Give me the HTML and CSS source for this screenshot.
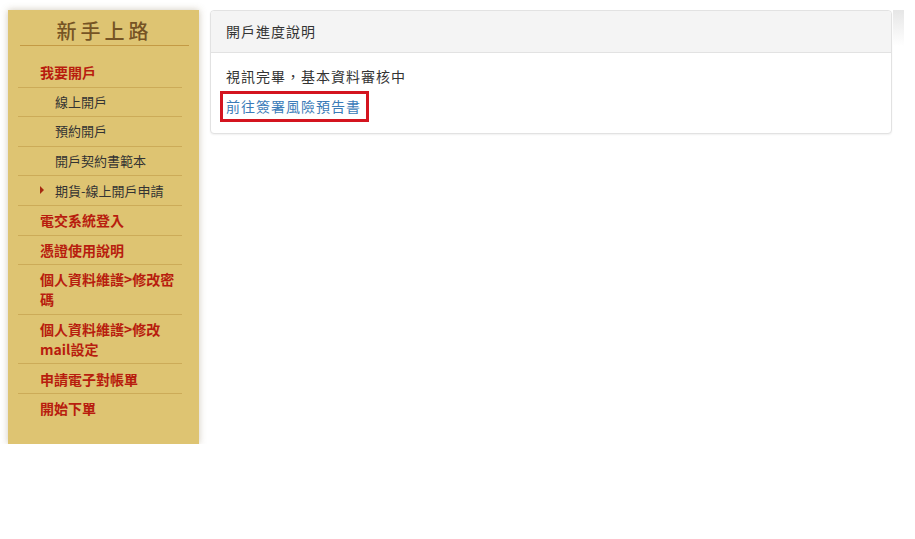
FILE: index.html
```html
<!DOCTYPE html>
<html lang="zh-Hant">
<head>
    <meta charset="UTF-8">
    <meta name="viewport" content="width=device-width, initial-scale=1.0">
    <title>開戶進度說明</title>
    <link rel="stylesheet" href="styles.css">
</head>
<body>
    <div class="page">
        <aside class="sidebar">
            <h3 class="side-title">新手上路</h3>
            <ul class="menu">
                <li class="main">我要開戶</li>
                <li class="sub">線上開戶</li>
                <li class="sub">預約開戶</li>
                <li class="sub">開戶契約書範本</li>
                <li class="sub arrow">期貨-線上開戶申請</li>
                <li class="main">電交系統登入</li>
                <li class="main">憑證使用說明</li>
                <li class="main">個人資料維護&gt;修改密碼</li>
                <li class="main">個人資料維護&gt;修改mail設定</li>
                <li class="main">申請電子對帳單</li>
                <li class="main last">開始下單</li>
            </ul>
        </aside>

        <div class="panel">
            <div class="panel-heading">開戶進度說明</div>
            <div class="panel-body">
                <p>視訊完畢，基本資料審核中</p>
                <a class="sign-link" href="#">前往簽署風險預告書</a>
            </div>
        </div>

        <div class="edge"></div>
    </div>
</body>
</html>
```

FILE: styles.css
```css
body {
    margin: 0;
    padding: 0;
    background: #fff;
    font-family: "Liberation Sans", "Noto Sans CJK TC", sans-serif;
    color: #333;
}

.page {
    display: flex;
    align-items: flex-start;
    padding: 10px 0 0 8px;
}

.sidebar {
    width: 191px;
    flex: none;
    background-color: #dec472;
    box-shadow: 0 0 7px rgba(120, 100, 60, 0.35);
    padding: 8px 0 21px;
}

.side-title {
    margin: 0 10px 0 12px;
    padding: 0 0 1px;
    font-family: "Noto Sans CJK TC", serif;
    font-size: 20px;
    font-weight: 500;
    line-height: 26px;
    letter-spacing: 4px;
    text-align: center;
    color: #765424;
    border-bottom: 1px solid #c49a44;
}

.menu {
    list-style: none;
    margin: 12px 17px 0 10px;
    padding: 0;
}

.menu li {
    line-height: 20px;
    padding: 4.3px 0 4.3px 22px;
    border-bottom: 1px solid #ccab58;
}

.menu li.last {
    border-bottom: none;
}

.main {
    font-family: "Noto Sans CJK TC", sans-serif;
    font-size: 14px;
    font-weight: 700;
    color: #b81d0e;
}

.sub {
    font-family: "Noto Sans CJK TC", sans-serif;
    font-size: 13px;
    color: #333;
    padding-left: 37px !important;
    position: relative;
}

.arrow::before {
    content: "";
    position: absolute;
    left: 22px;
    top: 10px;
    border-left: 4px solid #a52a10;
    border-top: 4px solid transparent;
    border-bottom: 4px solid transparent;
}

.panel {
    width: 680px;
    flex: none;
    margin-left: 11px;
    background: #fff;
    border: 1px solid #e2e2e2;
    border-radius: 4px;
    box-shadow: 0 1px 2px rgba(0, 0, 0, 0.06);
    font-family: "Noto Sans CJK TC", sans-serif;
    font-size: 14px;
    letter-spacing: 1px;
}

.panel-heading {
    background: #f4f4f4;
    padding: 10px 15px;
    line-height: 21px;
    border-bottom: 1px solid #e2e2e2;
    border-radius: 4px 4px 0 0;
    color: #333;
}

.panel-body {
    padding: 13px 15px 11px;
}

.panel-body p {
    margin: 0 0 5px;
    line-height: 20px;
}

.sign-link {
    display: inline-block;
    margin-left: -6px;
    padding: 2px 5px 2px 3px;
    line-height: 21px;
    border: 3px solid #d4141f;
    color: #3a7bb8;
    text-decoration: none;
}

.edge {
    width: 11px;
    height: 36px;
    margin-left: 1px;
    background: linear-gradient(to bottom, #e6e6e6, #ffffff);
}
```
